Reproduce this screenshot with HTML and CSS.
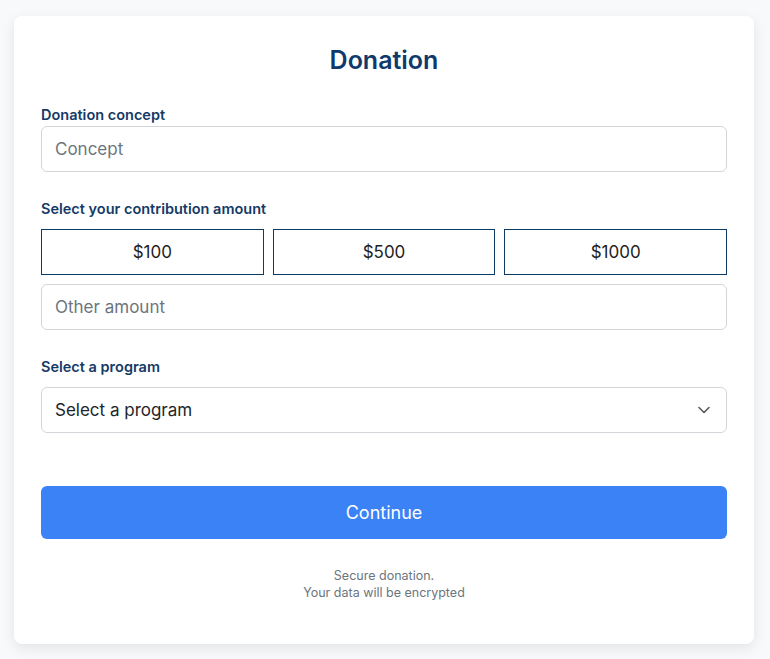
FILE: index.html
```html
<!DOCTYPE html>
<html lang="en">
<head>
<meta charset="utf-8">
<title>Donation</title>
<link rel="stylesheet" href="styles.css">
</head>
<body>
<main class="card">
  <h1 class="title">Donation</h1>
  <form class="form">
    <div class="field first">
      <label class="label" for="concept">Donation concept</label>
      <input class="input" id="concept" type="text" placeholder="Concept">
    </div>
    <div class="field">
      <span class="label">Select your contribution amount</span>
      <div class="amounts">
        <button type="button" class="amount">$100</button>
        <button type="button" class="amount">$500</button>
        <button type="button" class="amount">$1000</button>
      </div>
      <input class="input other" type="text" placeholder="Other amount">
    </div>
    <div class="field">
      <label class="label" for="program">Select a program</label>
      <div class="select" id="program">
        <span>Select a program</span>
        <svg class="chevron" width="12" height="8" viewBox="0 0 12 8" fill="none" stroke="#555b61" stroke-width="1.6" stroke-linecap="round" stroke-linejoin="round"><path d="M1 1.5l5 5 5-5"/></svg>
      </div>
    </div>
    <button type="button" class="continue">Continue</button>
    <p class="note">Secure donation.<br>Your data will be encrypted</p>
  </form>
</main>
</body>
</html>
```
FILE: styles.css
```css
* { box-sizing: border-box; }
html, body { margin: 0; padding: 0; }
body {
  background: #f8f9fa;
  font-family: Inter, "Noto Sans", sans-serif;
  padding: 16px 16px 16px 14px;
}
.card {
  background: #fff;
  border-radius: 8px;
  box-shadow: 0 4px 14px rgba(0,0,0,0.09);
  padding: 21px 27px 43px;
}
.title {
  margin: 0 0 23px;
  text-align: center;
  color: #0e3a6c;
  font-size: 25px;
  font-weight: 600;
  line-height: 46px;
}
.form { display: flex; flex-direction: column; }
.field { display: flex; flex-direction: column; margin-bottom: 28px; }
.label {
  color: #143a66;
  font-size: 14.5px;
  font-weight: 600;
  line-height: 17px;
  margin-bottom: 12px;
}
.first .label { margin-bottom: 3px; }
.input, .select {
  height: 46px;
  border: 1px solid #d2d6da;
  border-radius: 6px;
  padding: 0 13px;
  font: inherit;
  font-size: 17px;
  color: #212529;
  background: #fff;
}
.input::placeholder { color: #6c757d; }
.select {
  display: flex;
  align-items: center;
  justify-content: space-between;
  padding-right: 16px;
}
.amounts {
  display: grid;
  grid-template-columns: 1fr 1fr 1fr;
  gap: 9px;
  margin-bottom: 9px;
}
.amount {
  height: 46px;
  border: 1px solid #0d3b66;
  border-radius: 0;
  background: #fff;
  font: inherit;
  font-size: 17px;
  color: #1e1e1e;
}
.continue {
  margin-top: 25px;
  height: 53px;
  border: none;
  border-radius: 6px;
  background: #3b82f6;
  color: #fff;
  font: inherit;
  font-size: 18px;
}
.note {
  margin: 28px 0 0;
  text-align: center;
  font-size: 12.5px;
  line-height: 17px;
  color: #6c757d;
}
```
